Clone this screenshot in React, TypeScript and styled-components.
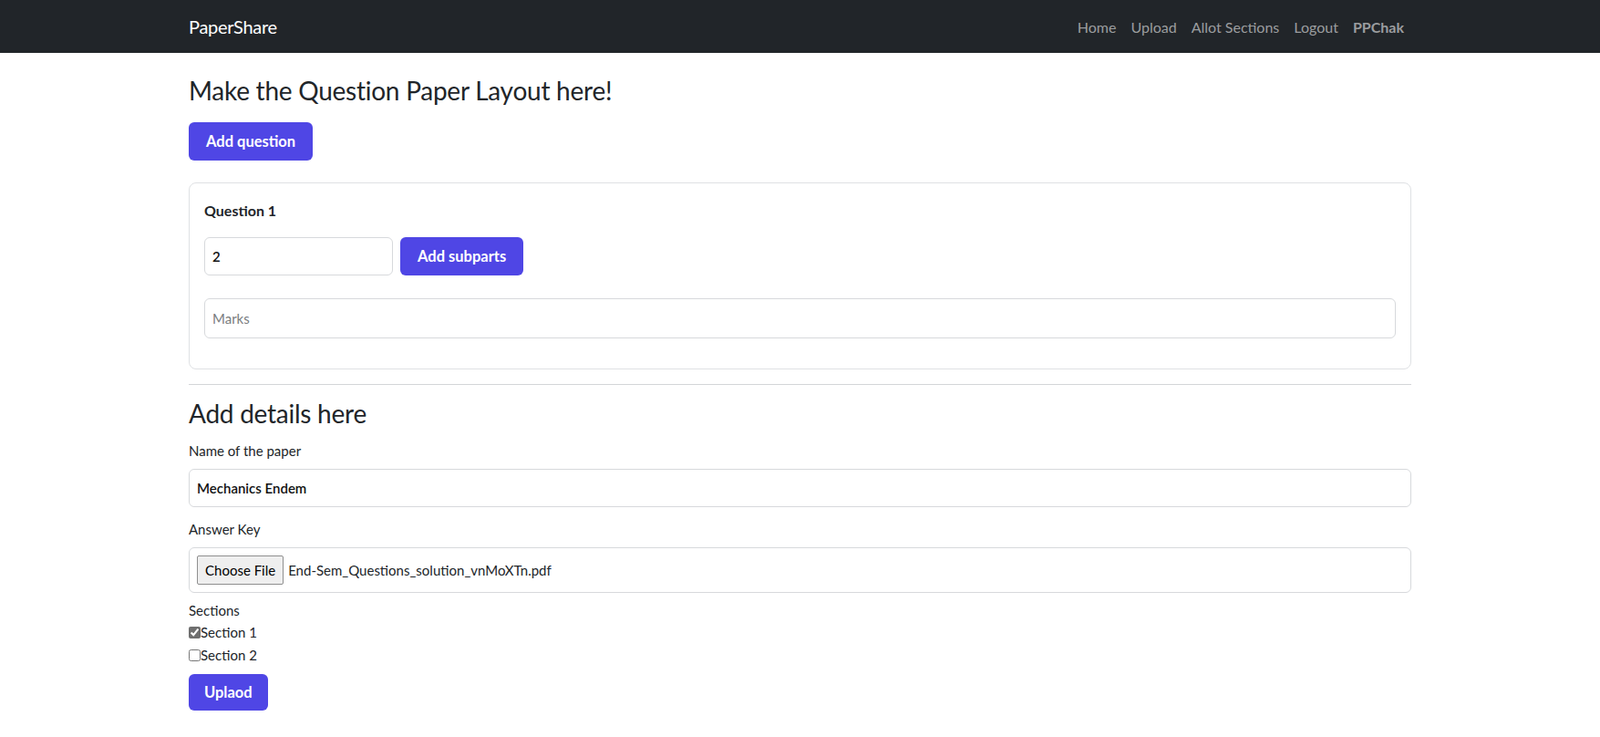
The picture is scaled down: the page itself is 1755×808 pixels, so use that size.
import React from 'react';
import styled, { createGlobalStyle } from 'styled-components';

const GlobalStyle = createGlobalStyle`
  body {
    margin: 0;
    font-family: Lato, "Open Sans", sans-serif;
    color: #212529;
    background: #fff;
  }
  * {
    box-sizing: border-box;
  }
`;

const Navbar = styled.nav`
  height: 58px;
  background: #212529;
`;

const NavInner = styled.div`
  width: 1341px;
  height: 100%;
  margin: 0 auto;
  display: flex;
  align-items: center;
  justify-content: space-between;
`;

const Brand = styled.a`
  color: #fff;
  font-size: 20px;
  letter-spacing: -0.3px;
  text-decoration: none;
`;

const NavLinks = styled.div`
  display: flex;
  align-items: center;
  gap: 16px;
  padding-right: 8px;
`;

const NavLink = styled.a<{ strong?: boolean }>`
  color: #9b9d9f;
  font-size: 16px;
  font-weight: ${props => (props.strong ? 700 : 400)};
  text-decoration: none;
`;

const Container = styled.main`
  width: 1341px;
  margin: 0 auto;
  padding-bottom: 28px;
`;

const Heading = styled.h3`
  font-size: 28px;
  font-weight: 400;
  line-height: 1.2;
  letter-spacing: -0.25px;
  margin: 0;
`;

const PageTitle = styled(Heading)`
  margin-top: 25px;
  margin-bottom: 17px;
`;

const PrimaryButton = styled.button<{ small?: boolean }>`
  background: #4f46e5;
  color: #fff;
  border: none;
  border-radius: 6px;
  font-family: inherit;
  font-size: 16.5px;
  font-weight: 700;
  height: ${props => (props.small ? 40 : 42)}px;
  padding: 0 ${props => (props.small ? 17 : 19)}px;
  cursor: pointer;
`;

const Card = styled.section`
  margin-top: 24px;
  border: 1px solid #dfe1e4;
  border-radius: 8px;
  padding: 18px 16px 17px;
`;

const QuestionTitle = styled.div`
  font-weight: 700;
  font-size: 16px;
  line-height: 24px;
  margin-bottom: 17px;
`;

const InputRow = styled.div`
  display: flex;
  gap: 8px;
  margin-bottom: 25px;
`;

const TextInput = styled.input<{ width?: number; tall?: boolean }>`
  width: ${props => (props.width ? `${props.width}px` : '100%')};
  height: ${props => (props.tall ? 44 : 42)}px;
  border: 1px solid #d7d9dc;
  border-radius: 6px;
  padding: 0 8px;
  font-family: inherit;
  font-size: 15px;
  font-weight: 600;
  color: #111;
  outline: none;
  &::placeholder {
    color: #7a7d80;
    font-weight: 400;
  }
`;

const MarksWrap = styled.div`
  margin-bottom: 16px;
`;

const Divider = styled.hr`
  margin: 16px 0 15px;
  border: none;
  border-top: 1px solid #d3d5d8;
`;

const Label = styled.label`
  display: block;
  font-size: 15px;
  line-height: 24px;
`;

const DetailsTitle = styled(Heading)`
  margin-bottom: 12px;
`;

const FieldLabel = styled(Label)`
  margin-bottom: 8px;
`;

const FieldGroup = styled.div<{ gap?: number }>`
  margin-bottom: ${props => props.gap ?? 12}px;
`;

const FileBox = styled.div`
  height: 50px;
  border: 1px solid #d7d9dc;
  border-radius: 6px;
  padding: 0 8px;
  display: flex;
  align-items: center;
  gap: 5px;
  font-size: 15px;
`;

const ChooseButton = styled.span`
  display: inline-flex;
  align-items: center;
  height: 32px;
  padding: 0 8px;
  background: #efefef;
  border: 1px solid #8f8f8f;
  border-radius: 2px;
  color: #000;
  font-size: 15px;
`;

const CheckRow = styled.label`
  display: flex;
  align-items: center;
  font-size: 15px;
  line-height: 25px;
`;

const Check = styled.input`
  margin: 0;
  width: 13px;
  height: 13px;
  accent-color: #6f6f6f;
`;

const SubmitWrap = styled.div`
  margin-top: 8px;
`;

export default function App() {
  return (
    <>
      <GlobalStyle />
      <Navbar>
        <NavInner>
          <Brand href="#">PaperShare</Brand>
          <NavLinks>
            <NavLink href="#">Home</NavLink>
            <NavLink href="#">Upload</NavLink>
            <NavLink href="#">Allot Sections</NavLink>
            <NavLink href="#">Logout</NavLink>
            <NavLink href="#" strong>
              PPChak
            </NavLink>
          </NavLinks>
        </NavInner>
      </Navbar>
      <Container>
        <PageTitle>Make the Question Paper Layout here!</PageTitle>
        <PrimaryButton>Add question</PrimaryButton>
        <Card>
          <QuestionTitle>Question 1</QuestionTitle>
          <InputRow>
            <TextInput width={207} defaultValue="2" />
            <PrimaryButton>Add subparts</PrimaryButton>
          </InputRow>
          <MarksWrap>
            <TextInput tall placeholder="Marks" />
          </MarksWrap>
        </Card>
        <Divider />
        <DetailsTitle>Add details here</DetailsTitle>
        <FieldGroup>
          <FieldLabel>Name of the paper</FieldLabel>
          <TextInput defaultValue="Mechanics Endem" />
        </FieldGroup>
        <FieldGroup gap={7}>
          <FieldLabel>Answer Key</FieldLabel>
          <FileBox>
            <ChooseButton>Choose File</ChooseButton>
            <span>End-Sem_Questions_solution_vnMoXTn.pdf</span>
          </FileBox>
        </FieldGroup>
        <Label>Sections</Label>
        <CheckRow>
          <Check type="checkbox" defaultChecked />
          Section 1
        </CheckRow>
        <CheckRow>
          <Check type="checkbox" />
          Section 2
        </CheckRow>
        <SubmitWrap>
          <PrimaryButton small>Uplaod</PrimaryButton>
        </SubmitWrap>
      </Container>
    </>
  );
}
